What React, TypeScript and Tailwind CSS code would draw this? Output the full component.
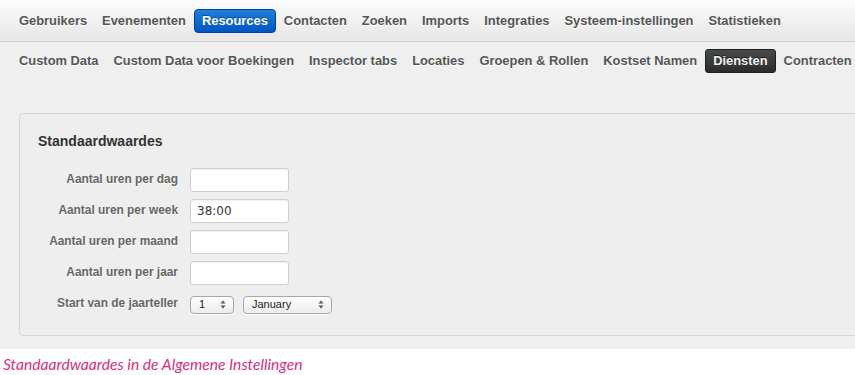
import React from "react";

const mainTabs = [
  "Gebruikers",
  "Evenementen",
  "Resources",
  "Contacten",
  "Zoeken",
  "Imports",
  "Integraties",
  "Systeem-instellingen",
  "Statistieken",
];

const subTabs = [
  "Custom Data",
  "Custom Data voor Boekingen",
  "Inspector tabs",
  "Locaties",
  "Groepen & Rollen",
  "Kostset Namen",
  "Diensten",
  "Contracten",
];

const fields = [
  { label: "Aantal uren per dag", value: "" },
  { label: "Aantal uren per week", value: "38:00" },
  { label: "Aantal uren per maand", value: "" },
  { label: "Aantal uren per jaar", value: "" },
];

function Arrows() {
  return (
    <svg width="6" height="9" viewBox="0 0 6 9" className="shrink-0">
      <path d="M3 0.5 L5.5 3.5 L0.5 3.5 Z" fill="#555" />
      <path d="M3 8.5 L5.5 5.5 L0.5 5.5 Z" fill="#555" />
    </svg>
  );
}

function FakeSelect({ value, width }: { value: string; width: string }) {
  return (
    <div
      className={`${width} h-[18px] flex items-center justify-between pl-[8px] pr-[7px] rounded-[4px] border border-[#a8a8a8] bg-gradient-to-b from-white to-[#ececec] shadow-[0_1px_0_rgba(255,255,255,0.8)] text-[11px] text-[#222] font-['Liberation_Sans',sans-serif]`}
    >
      <span>{value}</span>
      <Arrows />
    </div>
  );
}

export default function App() {
  return (
    <div className="w-[855px] h-[375px] overflow-hidden bg-white font-['Liberation_Sans',Arial,sans-serif]">
      <div className="bg-[#efefef] h-[349px]">
        {/* main nav */}
        <div className="h-[42px] flex items-center pl-[11.5px] whitespace-nowrap bg-gradient-to-b from-[#fcfcfc] to-[#e6e6e6] border-b border-[#cfcfcf]">
          {mainTabs.map((t) =>
            t === "Resources" ? (
              <span
                key={t}
                className="mx-[0.5px] h-[24px] flex items-center px-[7px] rounded-[4px] border border-[#00439a] bg-gradient-to-b from-[#1f80e0] to-[#0055bd] text-white text-[12.9px] font-bold [text-shadow:0_-1px_0_rgba(0,0,0,0.35)]"
              >
                {t}
              </span>
            ) : (
              <span
                key={t}
                className="px-[7.5px] text-[12.9px] font-bold text-[#555] [text-shadow:0_1px_0_#fff]"
              >
                {t}
              </span>
            )
          )}
        </div>

        {/* sub nav */}
        <div className="h-[38px] flex items-center pl-[11.5px] whitespace-nowrap">
          {subTabs.map((t) =>
            t === "Diensten" ? (
              <span
                key={t}
                className="mx-[0.5px] h-[24px] flex items-center px-[7px] rounded-[3px] border border-[#1e1e1e] bg-gradient-to-b from-[#4a4a4a] to-[#2c2c2c] text-[#f0f0f0] text-[12.9px] font-bold [text-shadow:0_-1px_0_rgba(0,0,0,0.6)]"
              >
                {t}
              </span>
            ) : (
              <span
                key={t}
                className="px-[7.5px] text-[12.9px] font-bold text-[#555] [text-shadow:0_1px_0_#fff]"
              >
                {t}
              </span>
            )
          )}
        </div>

        {/* panel */}
        <div className="mt-[33px] ml-[19px] w-[860px] h-[223px] rounded-[4px] border border-[#d6d6d6] bg-[#eeeeee] pt-[17px] pl-[18px]">
          <h2 className="text-[14px] leading-[20px] font-bold text-[#333]">Standaardwaardes</h2>
          <div className="mt-[17px] flex flex-col gap-[7px]">
            {fields.map((f) => (
              <div key={f.label} className="flex items-center h-[24px]">
                <label className="w-[140px] text-right text-[11.9px] font-bold text-[#666] [text-shadow:0_1px_0_#fff]">
                  {f.label}
                </label>
                <div className="ml-[12px] w-[99px] h-[24px] rounded-[3px] border border-[#cfcfcf] bg-white shadow-[inset_0_1px_1px_rgba(0,0,0,0.06)] flex items-center pl-[6px] text-[12px] text-[#333] font-['DejaVu_Sans',sans-serif]">
                  {f.value}
                </div>
              </div>
            ))}
            <div className="flex items-center h-[24px]">
              <label className="w-[140px] text-right text-[11.9px] font-bold text-[#666] [text-shadow:0_1px_0_#fff]">
                Start van de jaarteller
              </label>
              <div className="ml-[12px] pt-[1px] flex items-center gap-[9px]">
                <FakeSelect value="1" width="w-[44px]" />
                <FakeSelect value="January" width="w-[89px]" />
              </div>
            </div>
          </div>
        </div>
      </div>
      <div className="pl-[3px] pt-[6px] text-[15.6px] leading-[18px] italic text-[#d8307c] font-['Lato',sans-serif]">
        Standaardwaardes in de Algemene Instellingen
      </div>
    </div>
  );
}
